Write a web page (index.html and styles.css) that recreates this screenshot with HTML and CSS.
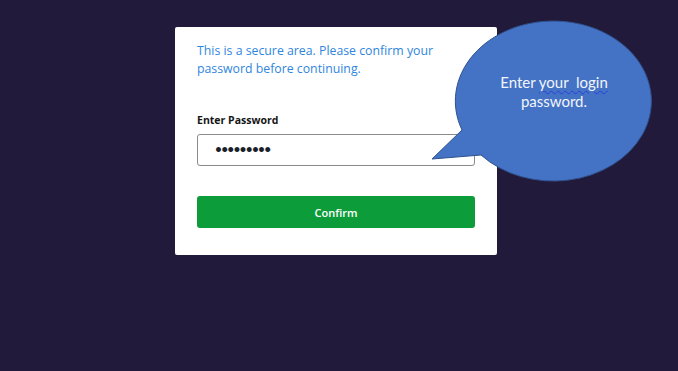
FILE: index.html
```html
<!DOCTYPE html>
<html lang="en">
<head>
<meta charset="utf-8">
<title>Confirm Password</title>
<link rel="stylesheet" href="styles.css">
</head>
<body>
<div class="page">
  <div class="card">
    <p class="msg">This is a secure area. Please confirm your password before continuing.</p>
    <form class="form">
      <label class="label">Enter Password</label>
      <div class="input"><span class="dots">•••••••••</span></div>
      <button type="button" class="btn">Confirm</button>
    </form>
  </div>
</div>
<svg class="bubble" width="678" height="371" viewBox="0 0 678 371" aria-hidden="true">
  <path d="M462 130 L432 159 L481 155 A98 80 0 1 0 462 130 Z" fill="#4472c4" stroke="#2f528f" stroke-width="1"/>
</svg>
<div class="bubble-text">Enter <span class="spell">your&nbsp; login</span><br>password.</div>
</body>
</html>
```
FILE: styles.css
```css
html, body {
  margin: 0;
  padding: 0;
}
body {
  background: #221a3a;
  width: 678px;
  height: 371px;
  overflow: hidden;
  position: relative;
  font-family: "Open Sans", "Liberation Sans", sans-serif;
}
.page {
  padding: 27px 0 0 175px;
}
.card {
  box-sizing: border-box;
  width: 322px;
  height: 228px;
  background: #ffffff;
  border-radius: 2px;
  padding: 15px 22px 0 22px;
}
.msg {
  margin: 0;
  color: #2f86de;
  font-size: 12.3px;
  line-height: 18px;
  width: 250px;
}
.form {
  display: flex;
  flex-direction: column;
  margin-top: 35px;
}
.label {
  font-size: 10.5px;
  font-weight: 700;
  color: #151515;
  line-height: 14px;
}
.input {
  box-sizing: border-box;
  margin-top: 7px;
  height: 32px;
  border: 1px solid #8a8a8a;
  border-radius: 3px;
  display: flex;
  align-items: center;
  padding-left: 16px;
}
.dots {
  font-family: "DejaVu Sans", sans-serif;
  font-size: 14px;
  font-weight: 700;
  color: #1b1f2a;
  letter-spacing: -2.8px;
  line-height: 1;
}
.btn {
  margin-top: 30px;
  height: 32px;
  border: none;
  border-radius: 3px;
  background: #0c9c3a;
  color: #ffffff;
  font-family: "Open Sans", "Liberation Sans", sans-serif;
  font-size: 11px;
  font-weight: 600;
  padding: 0;
}
.bubble {
  position: absolute;
  left: 0;
  top: 0;
  pointer-events: none;
}
.bubble-text {
  position: absolute;
  left: 474px;
  top: 73px;
  width: 160px;
  text-align: center;
  color: #f2f5fc;
  font-family: Lato, "Liberation Sans", sans-serif;
  font-size: 15px;
  line-height: 19px;
}
.spell {
  text-decoration: underline wavy #2a3fd8;
  text-decoration-thickness: 1px;
  text-underline-offset: 2px;
}
```
